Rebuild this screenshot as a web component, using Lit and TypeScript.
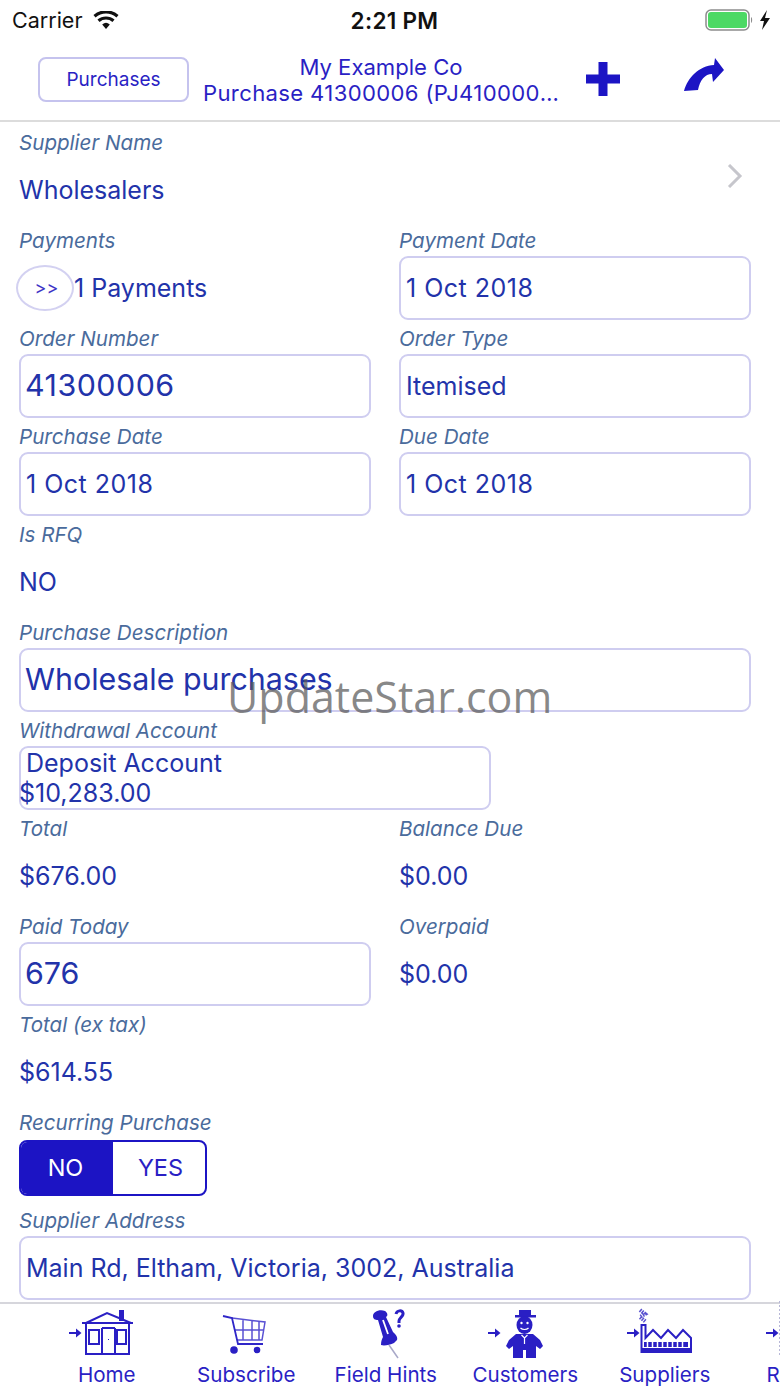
import {LitElement, html, css, svg} from 'lit';
import {customElement} from 'lit/decorators.js';

const arrow = (x: number) => svg`<path d="M${x} 24h9" stroke="#2a1fc4" stroke-width="2"/><path d="M${x + 7} 19.5l5.500 4.500-5.500 4.500z" fill="#2a1fc4"/>`;

const homeIcon = svg`${arrow(2)}
  <g fill="none" stroke="#2a1fc4" stroke-width="2">
    <path d="M15 14h51M19 14l21-10 24 10"/>
    <path d="M19 14v31h43V14M22 21h10v14H22zM35 19v26M48 19v26M35 19h13M50 21h9v14h-9z"/>
  </g>
  <path d="M52 1h5v11h-5z" fill="#2a1fc4"/>
  <path d="M41 30h1v1h-1z" fill="#2a1fc4"/>`;

const cartIcon = svg`<g fill="none" stroke="#2f26c8" stroke-width="1.800">
    <path d="M17 7l9 2 6 26h25"/>
    <path d="M26 9l33 4-3 18H31M29 21h28M37 10v21M46 11v20M53 12v19" stroke-width="1.500" opacity=".8"/>
  </g>
  <circle cx="28" cy="41" r="3.800" fill="#2a1fc4"/>
  <circle cx="51" cy="41" r="3.300" fill="#2a1fc4"/>`;

const pinIcon = svg`<path d="M27 7C27 3 33 0 39 2c3 2 3 5 1 6l7 15c3 3 5 5 4 8l-3 3c-4 2-10 3-13 2 0-4 1-6 2-8L32 11c-3 0-5-1-5-4z" fill="#2a1fc4"/>
  <path d="M37 11l5 14" stroke="#fff" stroke-width="1.800"/>
  <path d="M43 36l9 13" stroke="#a8a8c8" stroke-width="1.500"/>
  <path d="M50 5c1-4 6-4 7-1 1 3-4 5-4 8v2" fill="none" stroke="#2a1fc4" stroke-width="3"/>
  <circle cx="53" cy="17" r="1.800" fill="#2a1fc4"/>`;

const customerIcon = svg`${arrow(3)}
  <path d="M34 1h12v5h5v2.500H30V6h4z" fill="#2a1fc4"/>
  <ellipse cx="39.500" cy="16" rx="8" ry="9" fill="#2a1fc4"/>
  <circle cx="36.500" cy="14" r="1.200" fill="#fff"/><circle cx="42.500" cy="14" r="1.200" fill="#fff"/>
  <path d="M35.500 19c2 2 6 2 8 0" stroke="#fff" stroke-width="1.200" fill="none"/>
  <path d="M31 25h17l7 6 3 6-3 3-4-3v12H41V41h-3v8H28V37l-4 3-3-3 3-6z" fill="#2a1fc4"/>
  <path d="M36.500 26l3 3 3-3M39.500 29v6" stroke="#fff" stroke-width="1.200" fill="none"/>`;

const supplierIcon = svg`${arrow(2)}
  <path d="M16.500 16h4v13L28 21l8 8 7-8 8 8 7-8 8 8v14H16.500z" fill="none" stroke="#2a1fc4" stroke-width="2"/>
  <path d="M16 39h50v5H16z" fill="#2a1fc4"/>
  <path d="M19 33h44v5H19z" fill="#2a1fc4"/>
  <path d="M22.500 33v5M27.500 33v5M32.500 33v5M37.500 33v5M42.500 33v5M47.500 33v5M52.500 33v5M57.500 33v5" stroke="#fff" stroke-width="1.500"/>
  <path d="M15 1l5 4-5 3 6 5" fill="none" stroke="#5a52d0" stroke-width="4" stroke-dasharray="1.500 1"/>`;

const reportIcon = svg`${arrow(2)}<path d="M15.500 -8v54" stroke="#b8b8d8" stroke-dasharray="2 2"/>`;

@customElement('app-root')
export class AppRoot extends LitElement {
  static override styles = css`
    :host {
      display: block;
      position: relative;
      height: 1387px;
      overflow: hidden;
      background: #fff;
      font-family: Inter, "Liberation Sans", sans-serif;
      color: #2233aa;
    }
    .page {
      display: flex;
      flex-direction: column;
      height: 1387px;
    }
    .status {
      display: grid;
      grid-template-columns: 1fr auto 1fr;
      align-items: center;
      height: 40px;
      padding: 0 9px 0 12px;
      color: #111;
      font-size: 21.500px;
    }
    .carrier {
      display: flex;
      align-items: center;
      gap: 11px;
    }
    .time {
      margin-left: 6px;
      font-size: 22.500px;
      font-weight: 600;
      letter-spacing: 0.3px;
    }
    .battery {
      display: flex;
      justify-content: flex-end;
      align-items: center;
      gap: 6px;
    }
    .nav {
      display: flex;
      align-items: flex-start;
      height: 80px;
      border-bottom: 2px solid #dcdcdc;
      color: #2a1fc4;
    }
    .back {
      box-sizing: border-box;
      width: 151px;
      height: 45px;
      margin: 17px 14px 0 38px;
      border: 2px solid #c5c3ee;
      border-radius: 8px;
      font-size: 19px;
      line-height: 41px;
      text-align: center;
    }
    .title {
      width: 356px;
      margin-top: 14px;
      font-size: 22.100px;
      line-height: 26px;
      text-align: center;
    }
    .title div {
      white-space: nowrap;
      overflow: hidden;
      text-overflow: ellipsis;
    }
    .title .doc {
      letter-spacing: 0.35px;
    }
    .nav-plus {
      margin: 21px 0 0 26px;
    }
    .nav-share {
      margin: 17px 0 0 62px;
    }
    form {
      flex: 1;
      display: grid;
      grid-template-columns: 352px 352px;
      grid-auto-rows: 98px;
      column-gap: 28px;
      padding: 7px 0 0 19px;
      overflow: hidden;
    }
    .wide {
      grid-column: 1 / 3;
    }
    .label {
      height: 29px;
      color: #4a6b9c;
      font-size: 20.600px;
      font-style: italic;
      line-height: 28px;
    }
    .value {
      display: flex;
      align-items: center;
      height: 64px;
      font-size: 25px;
    }
    .box {
      box-sizing: border-box;
      height: 64px;
      padding-left: 5px;
      border: 2px solid #cfcdf0;
      border-radius: 9px;
      font-size: 25px;
      line-height: 60px;
    }
    .box.digits {
      letter-spacing: 0.5px;
    }
    .box.large {
      padding-left: 4px;
      font-size: 30.400px;
      line-height: 58px;
    }
    .account {
      width: 472px;
      padding-left: 0;
      line-height: 30px;
    }
    .account .name {
      display: block;
      padding-left: 5px;
    }
    .account .balance {
      display: block;
      margin-left: -2px;
    }
    .chevron {
      justify-content: space-between;
      padding-right: 8px;
    }
    .chevron svg {
      margin-bottom: 29px;
    }
    .round {
      flex: none;
      box-sizing: border-box;
      width: 58px;
      height: 46px;
      margin: 0 0 0 -3px;
      padding-left: 3px;
      border: 2px solid #d3d1f1;
      border-radius: 50%;
      color: #3f35c6;
      font-size: 18px;
      line-height: 42px;
      text-align: center;
    }
    .toggle {
      display: flex;
      box-sizing: border-box;
      width: 188px;
      height: 56px;
      margin-top: 2px;
      border: 2px solid #1c14c4;
      border-radius: 8px;
      overflow: hidden;
      color: #2a1fc4;
      font-size: 23.500px;
      line-height: 52px;
      text-align: center;
    }
    .toggle div {
      flex: 1;
      padding-left: 3px;
    }
    .toggle .on {
      flex: none;
      box-sizing: border-box;
      width: 92px;
      padding: 0 3px 0 0;
      background: #1c14c4;
      color: #fff;
    }
    .tabs {
      display: flex;
      flex: none;
      height: 83px;
      padding-left: 37px;
      border-top: 2px solid #d6d6dc;
      color: #2a1fc4;
      font-size: 20.600px;
    }
    .tab {
      flex: none;
      display: flex;
      flex-direction: column;
      align-items: center;
      width: 139.500px;
    }
    .tab svg {
      margin-top: 5px;
      overflow: visible;
    }
    .tab span {
      margin-top: 7px;
      line-height: 26px;
      white-space: nowrap;
    }
    .watermark {
      position: absolute;
      left: 227px;
      top: 667px;
      color: rgba(90, 90, 90, 0.72);
      font-family: "Open Sans", sans-serif;
      font-size: 43px;
      line-height: 60px;
      white-space: nowrap;
    }
  `;

  private field(label: string, body: unknown, wide = false) {
    return html`<div class=${wide ? 'wide' : ''}><div class="label">${label}</div>${body}</div>`;
  }

  private box(text: string, kind = '') {
    return html`<div class="box ${kind}">${text}</div>`;
  }

  private value(text: string) {
    return html`<div class="value">${text}</div>`;
  }

  private tab(label: string, icon: unknown) {
    return html`<div class="tab">
      <svg width="80" height="46" viewBox="0 0 80 46">${icon}</svg>
      <span>${label}</span>
    </div>`;
  }

  override render() {
    return html`
      <div class="page">
        <div class="status">
          <div class="carrier">
            Carrier
            <svg width="26" height="18" viewBox="0 0 26 18">
              <path d="M13 18l-3.800-4.600a6 6 0 0 1 7.600 0z" fill="#111"/>
              <path d="M5.500 9.800a11.500 11.500 0 0 1 15 0M1.500 5.200a17.500 17.500 0 0 1 23 0" fill="none" stroke="#111" stroke-width="3.200"/>
            </svg>
          </div>
          <div class="time">2:21 PM</div>
          <div class="battery">
            <svg width="48" height="22" viewBox="0 0 48 22">
              <rect x="1" y="1" width="43" height="20" rx="5" fill="none" stroke="#8c8c8c" stroke-width="1.500"/>
              <rect x="3" y="3" width="39" height="16" rx="3" fill="#4cd964"/>
              <path d="M46 8c1.500.5 1.500 5.500 0 6z" fill="#8c8c8c"/>
            </svg>
            <svg width="12" height="20" viewBox="0 0 12 20"><path d="M8 0L1 11h4l-2 9 8-12H6z" fill="#111"/></svg>
          </div>
        </div>

        <div class="nav">
          <div class="back">Purchases</div>
          <div class="title">
            <div>My Example Co</div>
            <div class="doc">Purchase 41300006 (PJ41000006)</div>
          </div>
          <svg class="nav-plus" width="36" height="36" viewBox="0 0 36 36">
            <path d="M13.500 1h9v12.500H35v9H22.500V35h-9V22.500H1v-9h12.500z" fill="#1c14c4"/>
          </svg>
          <svg class="nav-share" width="44" height="36" viewBox="0 0 44 36">
            <path d="M1 34C5 20 16 9 31 8l1-7 9 12-11 12-1-8c-7 0-12 6-14 16z" fill="#1c14c4"/>
          </svg>
        </div>

        <form>
          ${this.field('Supplier Name', html`<div class="value chevron">
            Wholesalers
            <svg width="16" height="24" viewBox="0 0 16 24"><path d="M2 1l11 11L2 23" fill="none" stroke="#c6c6cc" stroke-width="3"/></svg>
          </div>`, true)}
          ${this.field('Payments', html`<div class="value"><div class="round">&gt;&gt;</div>1 Payments</div>`)}
          ${this.field('Payment Date', this.box('1 Oct 2018', 'digits'))}
          ${this.field('Order Number', this.box('41300006', 'large digits'))}
          ${this.field('Order Type', this.box('Itemised'))}
          ${this.field('Purchase Date', this.box('1 Oct 2018', 'digits'))}
          ${this.field('Due Date', this.box('1 Oct 2018', 'digits'))}
          ${this.field('Is RFQ', this.value('NO'), true)}
          ${this.field('Purchase Description', this.box('Wholesale purchases', 'large'), true)}
          ${this.field('Withdrawal Account', html`<div class="box account"><span class="name">Deposit Account</span><span class="balance">$10,283.00</span></div>`, true)}
          ${this.field('Total', this.value('$676.00'))}
          ${this.field('Balance Due', this.value('$0.00'))}
          ${this.field('Paid Today', this.box('676', 'large'))}
          ${this.field('Overpaid', this.value('$0.00'))}
          ${this.field('Total (ex tax)', this.value('$614.55'), true)}
          ${this.field('Recurring Purchase', html`<div class="toggle"><div class="on">NO</div><div>YES</div></div>`, true)}
          ${this.field('Supplier Address', this.box('Main Rd, Eltham, Victoria, 3002, Australia'), true)}
        </form>

        <div class="tabs">
          ${this.tab('Home', homeIcon)}
          ${this.tab('Subscribe', cartIcon)}
          ${this.tab('Field Hints', pinIcon)}
          ${this.tab('Customers', customerIcon)}
          ${this.tab('Suppliers', supplierIcon)}
          ${this.tab('Reports', reportIcon)}
        </div>
      </div>
      <div class="watermark">UpdateStar.com</div>
    `;
  }
}

declare global {
  interface HTMLElementTagNameMap {
    'app-root': AppRoot;
  }
}
